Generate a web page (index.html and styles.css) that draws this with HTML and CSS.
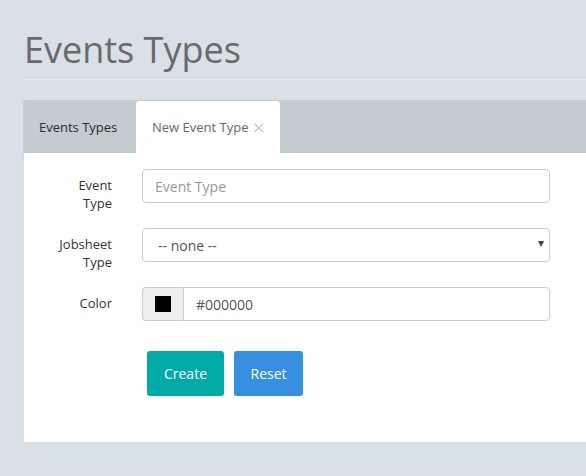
FILE: index.html
```html
<!DOCTYPE html>
<html>
<head>
<meta charset="utf-8">
<link rel="stylesheet" href="styles.css">
</head>
<body>
<div class="page">
  <h1 class="title">Events Types</h1>
  <div class="tabs">
    <div class="tab">Events Types</div>
    <div class="tab tab-active">New Event Type <span class="close">&times;</span></div>
  </div>
  <div class="panel">
    <form class="form">
      <label class="label">Event<br>Type</label>
      <input class="control" type="text" placeholder="Event Type">
      <label class="label">Jobsheet<br>Type</label>
      <div class="select-wrap">
        <select class="control select"><option>-- none --</option></select>
        <span class="caret"></span>
      </div>
      <label class="label">Color</label>
      <div class="group">
        <span class="addon"><span class="swatch"></span></span>
        <input class="control group-input" type="text" value="#000000">
      </div>
      <div></div>
      <div class="actions">
        <button type="button" class="btn btn-create">Create</button>
        <button type="button" class="btn btn-reset">Reset</button>
      </div>
    </form>
  </div>
</div>
</body>
</html>
```
FILE: styles.css
```css
html, body {
  margin: 0;
  padding: 0;
  background: #d9e0e7;
  font-family: "Open Sans", "DejaVu Sans", sans-serif;
  overflow: hidden;
}
.page {
  padding-left: 23px;
}
.title {
  margin: 25px 0 0 0;
  padding: 0 0 5px 1px;
  font-size: 36px;
  font-weight: 400;
  line-height: 49px;
  color: #6a6a6a;
  border-bottom: 1px solid #e8ecf0;
}
.tabs {
  margin-top: 20px;
  height: 53px;
  background: #c3cdd2;
  border-top-left-radius: 4px;
  display: flex;
  align-items: flex-end;
}
.tab {
  flex-shrink: 0;
  white-space: nowrap;
  height: 53px;
  box-sizing: border-box;
  padding: 0 18px 0 16px;
  font-size: 13px;
  line-height: 55px;
  color: #2b2b2b;
  width: 113px;
}
.tab-active {
  width: 144px;
  height: 52px;
  line-height: 53px;
  padding: 0 0 0 16px;
  background: #fff;
  color: #666;
  border-radius: 3px 3px 0 0;
}
.close {
  color: #b9b9b9;
  font-size: 21px;
  font-weight: 300;
  vertical-align: -3px;
  margin-left: 1px;
}
.panel {
  margin-left: 1px;
  background: #fff;
  box-shadow: 0 1px 1px rgba(0, 0, 0, 0.07);
  padding: 16px 36px 46px 0;
}
.form {
  display: grid;
  grid-template-columns: 88px 1fr;
  column-gap: 30px;
  row-gap: 25px;
  margin: 0;
}
.label {
  box-sizing: border-box;
  height: 34px;
  text-align: right;
  font-size: 13px;
  line-height: 18px;
  color: #333;
  padding-top: 7px;
}
.control {
  box-sizing: border-box;
  width: 100%;
  height: 34px;
  border: 1px solid #cccccc;
  border-radius: 4px;
  padding: 0 12px;
  font-family: "Open Sans", "DejaVu Sans", sans-serif;
  font-size: 14px;
  color: #555;
  background: #fff;
  outline: none;
}
.control::placeholder {
  color: #999;
}
.select-wrap {
  position: relative;
}
.select {
  appearance: none;
  -webkit-appearance: none;
  padding-left: 15px;
}
.caret {
  position: absolute;
  right: 6px;
  top: 13px;
  width: 0;
  height: 0;
  border-left: 3px solid transparent;
  border-right: 3px solid transparent;
  border-top: 6px solid #444;
}
.group {
  display: flex;
  height: 34px;
}
.addon {
  box-sizing: border-box;
  width: 41px;
  height: 34px;
  background: #eeeeee;
  border: 1px solid #cccccc;
  border-right: none;
  border-radius: 4px 0 0 4px;
  display: flex;
  align-items: center;
  justify-content: center;
}
.swatch {
  width: 16px;
  height: 16px;
  background: #000;
}
.group-input {
  flex: 1;
  border-radius: 0 4px 4px 0;
  border-left: 1px solid #cccccc;
}
.actions {
  display: flex;
  gap: 10px;
  padding-left: 5px;
  padding-top: 5px;
}
.btn {
  height: 45px;
  border: none;
  border-radius: 3px;
  color: #fff;
  font-family: "Open Sans", "DejaVu Sans", sans-serif;
  font-size: 14px;
  padding: 0;
  cursor: pointer;
}
.btn-create {
  background: #00aaa6;
  width: 77px;
}
.btn-reset {
  background: #368fe0;
  width: 69px;
}
```
